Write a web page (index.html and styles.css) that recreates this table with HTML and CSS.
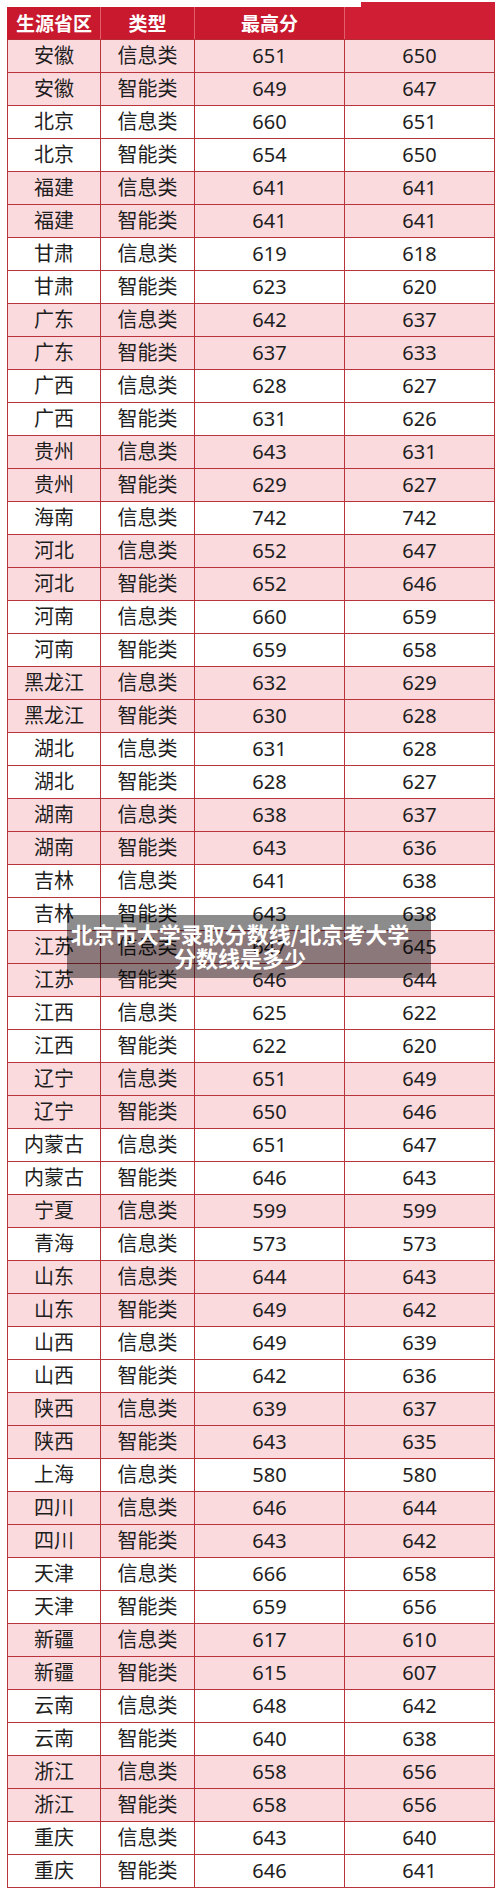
FILE: index.html
```html
<!DOCTYPE html>
<html lang="zh">
<head>
<meta charset="utf-8">
<title>北京市大学录取分数线</title>
<link rel="stylesheet" href="styles.css">
</head>
<body>
<div class="page">
<table class="scores">
<colgroup><col class="c1"><col class="c2"><col class="c3"><col class="c4"></colgroup>
<thead>
<tr><th>生源省区</th><th>类型</th><th>最高分</th><th class="last"></th></tr>
</thead>
<tbody>
<tr class="p"><td>安徽</td><td>信息类</td><td>651</td><td>650</td></tr>
<tr class="p"><td>安徽</td><td>智能类</td><td>649</td><td>647</td></tr>
<tr><td>北京</td><td>信息类</td><td>660</td><td>651</td></tr>
<tr><td>北京</td><td>智能类</td><td>654</td><td>650</td></tr>
<tr class="p"><td>福建</td><td>信息类</td><td>641</td><td>641</td></tr>
<tr class="p"><td>福建</td><td>智能类</td><td>641</td><td>641</td></tr>
<tr><td>甘肃</td><td>信息类</td><td>619</td><td>618</td></tr>
<tr><td>甘肃</td><td>智能类</td><td>623</td><td>620</td></tr>
<tr class="p"><td>广东</td><td>信息类</td><td>642</td><td>637</td></tr>
<tr class="p"><td>广东</td><td>智能类</td><td>637</td><td>633</td></tr>
<tr><td>广西</td><td>信息类</td><td>628</td><td>627</td></tr>
<tr><td>广西</td><td>智能类</td><td>631</td><td>626</td></tr>
<tr class="p"><td>贵州</td><td>信息类</td><td>643</td><td>631</td></tr>
<tr class="p"><td>贵州</td><td>智能类</td><td>629</td><td>627</td></tr>
<tr><td>海南</td><td>信息类</td><td>742</td><td>742</td></tr>
<tr class="p"><td>河北</td><td>信息类</td><td>652</td><td>647</td></tr>
<tr class="p"><td>河北</td><td>智能类</td><td>652</td><td>646</td></tr>
<tr><td>河南</td><td>信息类</td><td>660</td><td>659</td></tr>
<tr><td>河南</td><td>智能类</td><td>659</td><td>658</td></tr>
<tr class="p"><td>黑龙江</td><td>信息类</td><td>632</td><td>629</td></tr>
<tr class="p"><td>黑龙江</td><td>智能类</td><td>630</td><td>628</td></tr>
<tr><td>湖北</td><td>信息类</td><td>631</td><td>628</td></tr>
<tr><td>湖北</td><td>智能类</td><td>628</td><td>627</td></tr>
<tr class="p"><td>湖南</td><td>信息类</td><td>638</td><td>637</td></tr>
<tr class="p"><td>湖南</td><td>智能类</td><td>643</td><td>636</td></tr>
<tr><td>吉林</td><td>信息类</td><td>641</td><td>638</td></tr>
<tr><td>吉林</td><td>智能类</td><td>643</td><td>638</td></tr>
<tr class="p"><td>江苏</td><td>信息类</td><td>647</td><td>645</td></tr>
<tr class="p"><td>江苏</td><td>智能类</td><td>646</td><td>644</td></tr>
<tr><td>江西</td><td>信息类</td><td>625</td><td>622</td></tr>
<tr><td>江西</td><td>智能类</td><td>622</td><td>620</td></tr>
<tr class="p"><td>辽宁</td><td>信息类</td><td>651</td><td>649</td></tr>
<tr class="p"><td>辽宁</td><td>智能类</td><td>650</td><td>646</td></tr>
<tr><td>内蒙古</td><td>信息类</td><td>651</td><td>647</td></tr>
<tr><td>内蒙古</td><td>智能类</td><td>646</td><td>643</td></tr>
<tr class="p"><td>宁夏</td><td>信息类</td><td>599</td><td>599</td></tr>
<tr><td>青海</td><td>信息类</td><td>573</td><td>573</td></tr>
<tr class="p"><td>山东</td><td>信息类</td><td>644</td><td>643</td></tr>
<tr class="p"><td>山东</td><td>智能类</td><td>649</td><td>642</td></tr>
<tr><td>山西</td><td>信息类</td><td>649</td><td>639</td></tr>
<tr><td>山西</td><td>智能类</td><td>642</td><td>636</td></tr>
<tr class="p"><td>陕西</td><td>信息类</td><td>639</td><td>637</td></tr>
<tr class="p"><td>陕西</td><td>智能类</td><td>643</td><td>635</td></tr>
<tr><td>上海</td><td>信息类</td><td>580</td><td>580</td></tr>
<tr class="p"><td>四川</td><td>信息类</td><td>646</td><td>644</td></tr>
<tr class="p"><td>四川</td><td>智能类</td><td>643</td><td>642</td></tr>
<tr><td>天津</td><td>信息类</td><td>666</td><td>658</td></tr>
<tr><td>天津</td><td>智能类</td><td>659</td><td>656</td></tr>
<tr class="p"><td>新疆</td><td>信息类</td><td>617</td><td>610</td></tr>
<tr class="p"><td>新疆</td><td>智能类</td><td>615</td><td>607</td></tr>
<tr><td>云南</td><td>信息类</td><td>648</td><td>642</td></tr>
<tr><td>云南</td><td>智能类</td><td>640</td><td>638</td></tr>
<tr class="p"><td>浙江</td><td>信息类</td><td>658</td><td>656</td></tr>
<tr class="p"><td>浙江</td><td>智能类</td><td>658</td><td>656</td></tr>
<tr><td>重庆</td><td>信息类</td><td>643</td><td>640</td></tr>
<tr><td>重庆</td><td>智能类</td><td>646</td><td>641</td></tr>
</tbody>
</table>
<div class="caption">北京市大学录取分数线/北京考大学<br>分数线是多少</div>
</div>
</body>
</html>
```

FILE: styles.css
```css
html, body {
  margin: 0;
  padding: 0;
  background: #ffffff;
}

.page {
  position: relative;
  width: 500px;
  padding: 7px 0 0 7px;
  box-sizing: border-box;
  font-family: "Noto Sans", "Noto Sans CJK SC", sans-serif;
}

.scores {
  border-collapse: collapse;
  table-layout: fixed;
  width: 487px;
}

.scores .c1 { width: 93px; }
.scores .c2 { width: 94px; }
.scores .c3 { width: 150px; }
.scores .c4 { width: 150px; }

.scores th {
  position: relative;
  height: 32px;
  padding: 0;
  box-sizing: border-box;
  background: #c8192e;
  color: #ffffff;
  font-family: "Noto Sans CJK SC", sans-serif;
  font-weight: 700;
  font-size: 19px;
  line-height: 24px;
  text-align: center;
  vertical-align: middle;
  border-left: 1px solid #e2606e;
  border-right: 1px solid #e2606e;
  border-bottom: 1px solid #b82a36;
}

.scores th:first-child {
  border-left: 1px solid #c8192e;
}

.scores th.last {
  background: #d01e35;
  border-right: 1px solid #d01e35;
}

.scores th.last::before {
  content: "";
  position: absolute;
  left: 16px;
  right: -1px;
  top: -5px;
  height: 6px;
  background: #d01e35;
}

.scores td {
  height: 33px;
  padding: 0;
  box-sizing: border-box;
  border: 1px solid #b9333d;
  color: #1e1e1e;
  font-family: "Noto Sans", "Noto Sans CJK SC", sans-serif;
  font-size: 20px;
  line-height: 24px;
  text-align: center;
  vertical-align: middle;
}

.scores tr.p td {
  background: #fbdade;
}

.caption {
  position: absolute;
  left: 67px;
  top: 915px;
  width: 364px;
  height: 63px;
  box-sizing: border-box;
  padding: 6px 18px 0 0;
  background: rgba(0, 0, 0, 0.45);
  color: #ffffff;
  font-family: "Noto Sans CJK SC", sans-serif;
  font-weight: 700;
  font-size: 22px;
  line-height: 24px;
  text-align: center;
  white-space: nowrap;
}
```
